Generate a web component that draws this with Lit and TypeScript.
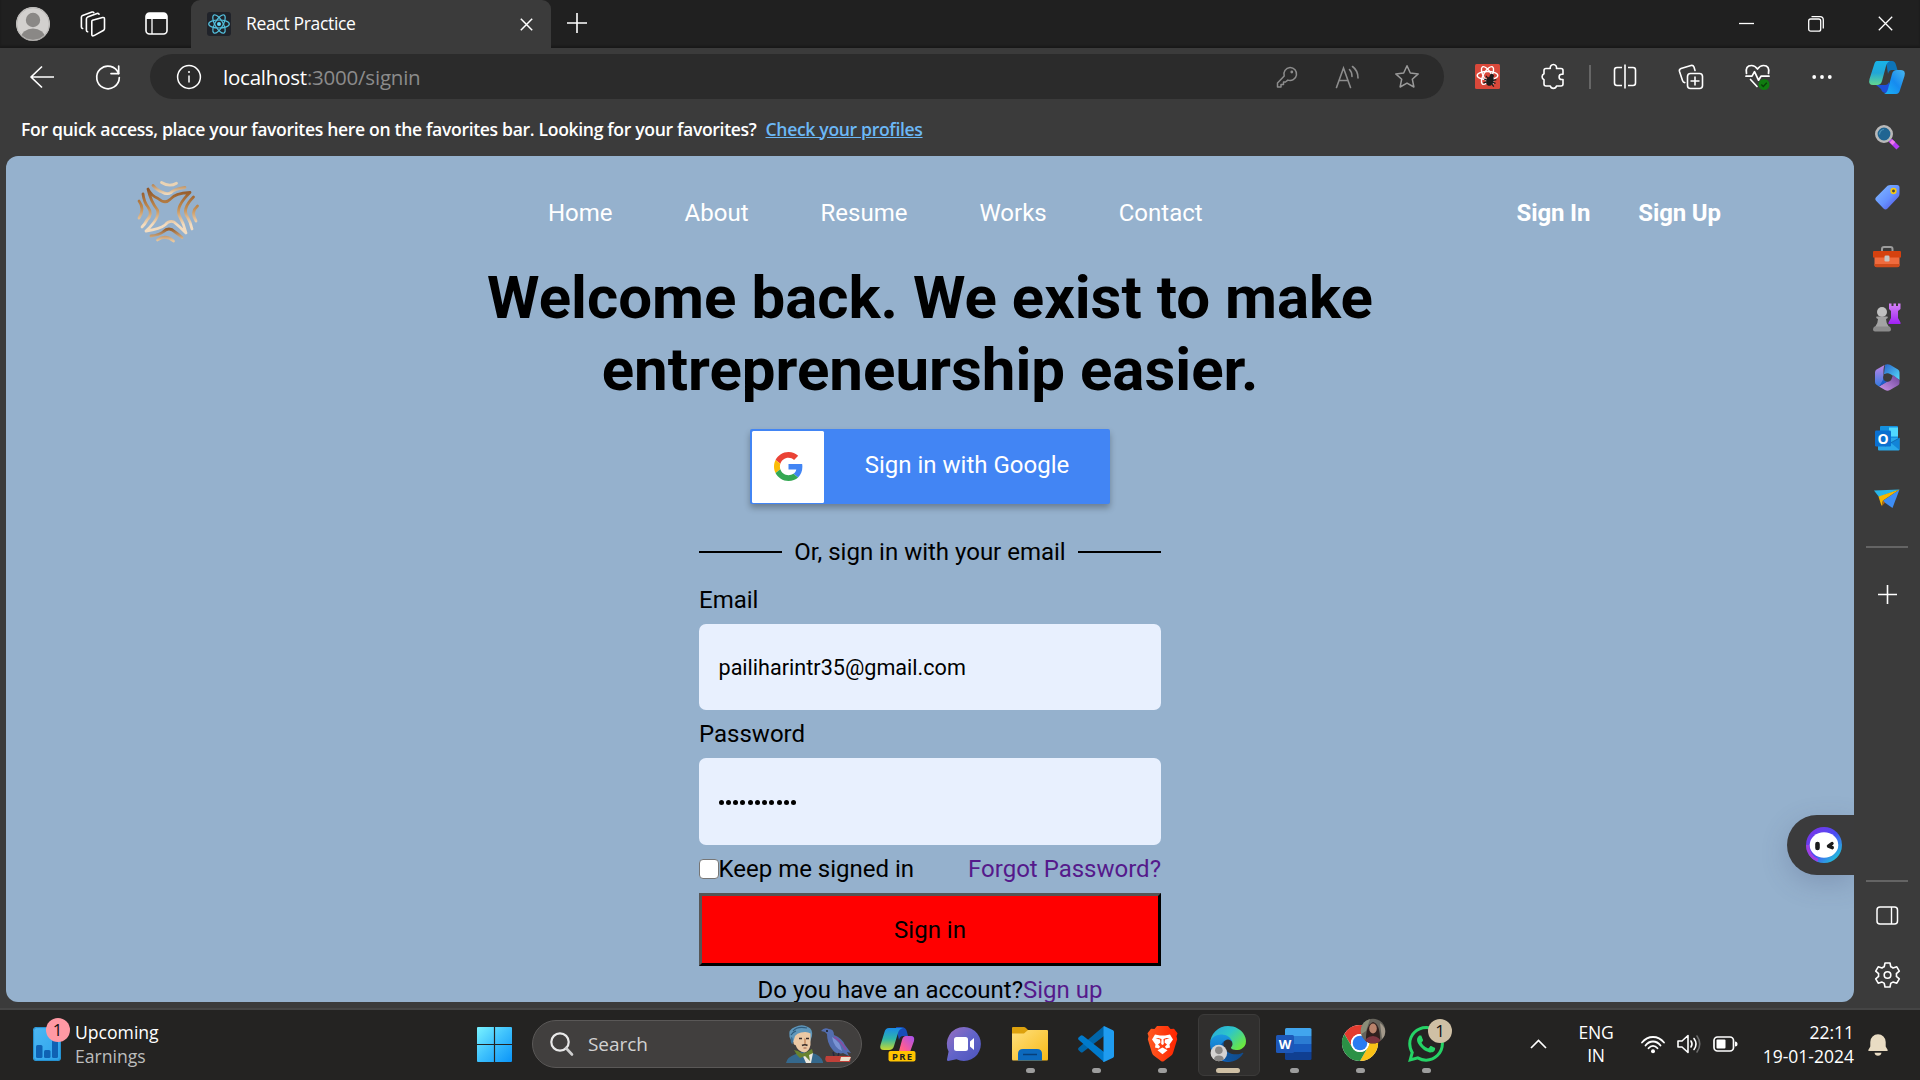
import { LitElement, html, css, svg } from "lit";
import { customElement } from "lit/decorators.js";

/* Inline icon: a w x h drawing whose user units are screen pixels unless a viewBox is given. */
const icon = (w: number, h: number, body: unknown, viewBox = `0 0 ${w} ${h}`) =>
  html`<svg class="icon" width=${w} height=${h} viewBox=${viewBox} fill="none">${body}</svg>`;

const avatar = icon(34, 34, svg`
  <defs><clipPath id="av"><circle cx="17" cy="17" r="17"/></clipPath></defs>
  <g clip-path="url(#av)"><rect width="34" height="34" fill="#d2d0ce"/>
  <circle cx="17" cy="13" r="7.2" fill="#8a8886"/><ellipse cx="17" cy="31" rx="12" ry="9.5" fill="#8a8886"/></g>
  <circle cx="17" cy="17" r="16.3" stroke="#b9b7b5" stroke-width="1"/>`);

const workspaces = icon(26, 26, svg`<g stroke="#fff" stroke-width="1.6" stroke-linejoin="round" stroke-linecap="round">
  <path d="M12.5 9.2 22.5 6.5q2-.4 2 1.5v9.5q0 1-.8 1.8L14 24.6q-2.2.9-2.2-1V10.5q0-1 .7-1.3z"/>
  <path d="M7.6 20.8q-1.2-.3-1.2-1.6V8q0-1.3 1.2-1.9l9.4-3.6q1.6-.5 2 .8"/>
  <path d="M2.6 17.5q-1.2-.3-1.2-1.6V6.3q0-1.3 1.2-1.9L12 1.1q1.4-.4 1.8.5"/></g>`);

const tabActions = icon(23, 23, svg`<rect x="1" y="1" width="21" height="21" rx="3.5" stroke="#fff" stroke-width="1.6"/>
  <path d="M1 7V4.5Q1 1 4.500 1h14Q22 1 22 4.500V7z" fill="#fff"/><path d="M7 7v15" stroke="#fff" stroke-width="1.3"/>`);

const reactFav = icon(24, 24, svg`<rect width="24" height="24" rx="3" fill="#20232a"/>
  <g stroke="#53c1de" stroke-width="1.200"><ellipse cx="12" cy="12" rx="10.300" ry="4"/>
  <ellipse cx="12" cy="12" rx="10.300" ry="4" transform="rotate(60 12 12)"/>
  <ellipse cx="12" cy="12" rx="10.300" ry="4" transform="rotate(120 12 12)"/></g><circle cx="12" cy="12" r="2" fill="#61dafb"/>`);

const cross = (s: number, w: number) => icon(s, s, svg`<path d="M.8.8 ${s - 0.8} ${s - 0.8}M${s - 0.8}.8.8 ${s - 0.8}" stroke="#fff" stroke-width=${w}/>`);
const plus = (s: number) => icon(s, s, svg`<path d="M${s / 2} 0v${s}M0 ${s / 2}h${s}" stroke="#fff" stroke-width="1.600"/>`);
const minimise = icon(15, 15, svg`<path d="M0 7.500h15" stroke="#fff" stroke-width="1.300"/>`);
const restore = icon(16, 16, svg`<rect x=".7" y="3" width="12" height="12.200" rx="2" stroke="#fff" stroke-width="1.300"/>
  <path d="M3.500.7h8.500q3.300 0 3.300 3.300v8.500" stroke="#fff" stroke-width="1.300"/>`);

const back = icon(26, 24, svg`<path d="M13 1.500 2 12l11 10.500M2 12h23" stroke="#fff" stroke-width="1.700" stroke-linejoin="round"/>`);
const refresh = icon(26, 26, svg`<path d="M23.600 9.500A11.300 11.300 0 1 0 24.300 13.500" stroke="#fff" stroke-width="1.700" stroke-linecap="round"/>
  <path d="M23.700 2v7.600H16" stroke="#fff" stroke-width="1.700" stroke-linecap="round" stroke-linejoin="round"/>`);
const info = icon(26, 26, svg`<circle cx="13" cy="13" r="11.400" stroke="#fff" stroke-width="1.500"/>
  <path d="M13 11.500v7" stroke="#fff" stroke-width="1.500"/><circle cx="13" cy="8" r="1" fill="#fff"/>`);
const key = icon(22, 22, svg`<g stroke="#8d8d8d" stroke-width="1.500" stroke-linejoin="round"><path d="M14 1.500a6.500 6.500 0 1 1-2.200 12.600L9.500 16H7.500v2.500H5V21H1.500v-4L8.200 10A6.500 6.500 0 0 1 14 1.500z"/></g><circle cx="15.800" cy="6" r="1.400" fill="#8d8d8d"/>`);
const readAloud = icon(25, 24, svg`<g stroke="#8d8d8d" stroke-width="1.600" stroke-linecap="round"><path d="M1.500 22.500 8.500 3l7 19.500M4 15.500h9"/>
  <path d="M14.500 4.500q2.500 2.500 2.500 7M17.500 1.500q5.500 4 5.500 11.500"/></g>`);
const star = icon(26, 26, svg`<path d="m13 1.800 3.300 7.200 7.900.9-5.900 5.300 1.600 7.800L13 19.100 6.100 23l1.600-7.800-5.900-5.300 7.900-.9z" stroke="#9a9a9a" stroke-width="1.500" stroke-linejoin="round"/>`);
const devtools = icon(25, 25, svg`<rect width="25" height="25" rx="1.500" fill="#d9483a"/>
  <g stroke="#fff" stroke-width="1.400"><ellipse cx="12.500" cy="11.500" rx="10.300" ry="4"/>
  <ellipse cx="12.500" cy="11.500" rx="10" ry="4" transform="rotate(60 12.500 11.500)"/><ellipse cx="12.500" cy="11.500" rx="10" ry="4" transform="rotate(120 12.500 11.500)"/></g>
  <g transform="rotate(20 15 17)"><ellipse cx="15" cy="17" rx="3.600" ry="5" fill="#1d1d1d"/><circle cx="15" cy="11.800" r="2.200" fill="#1d1d1d"/>
  <path d="M9.500 13.500 20.500 21M9.500 21l11-7.500M9 17.300h12" stroke="#1d1d1d" stroke-width="1.300"/></g>`);
const puzzle = icon(24, 25, svg`<path d="M3 6.500Q3 4.500 5 4.500h4.300a3.200 3.200 0 1 1 6.200 0H20q2 0 2 2v3.800h-1.300a2.600 2.600 0 1 0 0 5.200H22v4.500q0 2-2 2h-4.500a3.200 3.200 0 0 1-6.200 0H5q-2 0-2-2v-4.200a3.300 3.300 0 0 1 0-6z" stroke="#fff" stroke-width="1.600" stroke-linejoin="round"/>`);
const split = icon(24, 25, svg`<path d="M9 3.500H4Q1.500 3.500 1.500 6v13Q1.500 21.500 4 21.500h5M15 3.500h5q2.500 0 2.500 2.500v13q0 2.500-2.500 2.500h-5M12 .5v24" stroke="#fff" stroke-width="1.600"/>`);
const collections = icon(26, 26, svg`<rect x="9.500" y="9.500" width="15" height="15" rx="3" stroke="#fff" stroke-width="1.600"/>
  <path d="M17 12.500v9M12.500 17h9" stroke="#fff" stroke-width="1.600"/><path d="M6.800 18.600q-1.600 0-2.200-1.800L1.500 7.500q-.6-2.200 1.500-3L13 1.500q2.200-.5 3 1.500l1 3.500" stroke="#fff" stroke-width="1.600" stroke-linecap="round"/>`);
const essentials = icon(28, 28, svg`<g stroke="#fff" stroke-width="1.700" stroke-linejoin="round" stroke-linecap="round">
  <path d="M2.500 10.500Q1 2.500 7.500 2.500q3.500 0 6 3.500 2.500-3.500 6-3.500 6.500 0 5 8M2 13.200h6l2.500-4.500 4 8.500 2.500-4h8M6.500 16.500l6.500 7"/></g>
  <circle cx="20" cy="21.500" r="5.500" fill="#107c10"/><path d="m17.300 21.500 2 2 3.500-3.800" stroke="#0a3f0a" stroke-width="1.300"/>`);
const dots = icon(20, 6, svg`<g fill="#fff"><circle cx="2.200" cy="3" r="1.900"/><circle cx="10" cy="3" r="1.900"/><circle cx="17.800" cy="3" r="1.900"/></g>`);

const copilot = icon(36, 33, svg`<defs><linearGradient id="cA" x1="0" y1="0" x2="0" y2="1"><stop stop-color="#18b4e8"/><stop offset=".5" stop-color="#22a7d8"/><stop offset="1" stop-color="#63d88f"/></linearGradient>
  <linearGradient id="cB" x1="0" y1="1" x2="1" y2="0"><stop stop-color="#1bb6f5"/><stop offset=".5" stop-color="#168bf0"/><stop offset="1" stop-color="#48b6ee"/></linearGradient></defs>
  <path d="M17 0h6q3 0 4 4l1.500 5H23q-3 0-4 4z" fill="#0d74b8"/><path d="M7 24h9q3 0 4-3l2 11h-5q-4 0-5-4z" fill="#1d4fd7"/>
  <path d="M8 0h13q-3 1-4 5l-4 15q-1 4-5 4H4q-5 0-3.500-6L5 4Q6 0 8 0z" fill="url(#cA)"/>
  <path d="M27 33H15q3-1 4-5l4-15q1-4 5-4h4q5 0 3.500 6L31 29q-1 4-4 4z" fill="url(#cB)"/>`);

const sideSearch = icon(26, 26, svg`<path d="m16 16 8 8" stroke="#b53bf5" stroke-width="4.500"/><path d="m17 17 3 2.500" stroke="#ee7bea" stroke-width="4"/>
  <circle cx="10" cy="10" r="7.700" fill="#206592" stroke="#b9b9b9" stroke-width="2.600"/><path d="M5.500 10.500a4.700 4.700 0 0 1 4.500-5" stroke="#4b8fb4" stroke-width="1.200"/>`);
const tag = icon(25, 25, svg`<defs><linearGradient id="tg" x1="0" y1="0" x2="1" y2="1"><stop stop-color="#83bdff"/><stop offset=".55" stop-color="#6591ff"/><stop offset="1" stop-color="#5145db"/></linearGradient></defs>
  <path d="M12.500.8Q14 0 15.500 0H22q2.500 0 2.500 2.500V9q0 2-1.300 3.300L12.500 23.500q-2 2-4 0L1.300 16q-2-2 0-4z" fill="url(#tg)"/><circle cx="18.500" cy="6" r="2.300" fill="#444" stroke="#f5c711" stroke-width="1.700"/>`);
const toolbox = icon(28, 22, svg`<path d="M9 6V3q0-2 2-2h6.500q2 0 2 2v3" stroke="#9c9c9c" stroke-width="2"/>
  <path d="M1.500 11h25v8q0 2-2 2h-21q-2 0-2-2z" fill="#ef6b3e"/><path d="M1.500 18h25v1.500q0 1.800-2 1.800h-21q-2 0-2-1.800z" fill="#d04c1c"/><path d="M0 6q0-1 1-1h26q1 0 1 1v5.500H0z" fill="#d5410f"/><rect x="11.500" y="9.500" width="5" height="6" rx="1.300" fill="#c4c4c4"/>`);
const chess = icon(28, 29, svg`<defs><linearGradient id="rk" x1="0" y1="0" x2="0" y2="1"><stop stop-color="#d583f5"/><stop offset="1" stop-color="#a020f5"/></linearGradient></defs>
  <path d="M16 .5h2.500V3h2V.5H23V3h2V.5h2.500V6L25 8v7l2.500 4.500V21H15.500v-1.500L18 15V8l-2-2z" fill="url(#rk)"/>
  <circle cx="9" cy="9" r="5" fill="#c0c0c0"/><path d="M3.500 13.500h11q1 1.500-1.500 2.500 0 4.500 3 8H2q3-3.500 3-8-2.500-1-1.500-2.500z" fill="#a3a3a3"/><path d="M1.500 23.500h15q1.500 1 1.500 3t-2 2H2q-2 0-2-2t1.500-3z" fill="#8b8b8b"/>`);
const m365 = icon(25, 27, svg`<defs><linearGradient id="mA" x1="0" y1="0" x2="0" y2="1"><stop stop-color="#c084e6"/><stop offset="1" stop-color="#357bdf"/></linearGradient>
  <linearGradient id="mB" x1="0" y1="0" x2="1" y2="1"><stop stop-color="#2a63c9"/><stop offset="1" stop-color="#53dcfb"/></linearGradient><linearGradient id="mC" x1="0" y1="1" x2="1" y2="0"><stop stop-color="#cf97ec"/><stop offset="1" stop-color="#6b4399"/></linearGradient></defs>
  <path d="M10 .8Q12.500-.5 15 .8l8 4.700q1.500 1 1.500 3V16L16 10.500 9 10z" fill="url(#mB)"/><path d="m4 22.500 8-5q5-2 6-6.500l6.500 5v3q0 1.500-1.300 2.300L15 26q-2.500 1.500-5 0z" fill="url(#mC)"/>
  <path d="M9.500 1Q8.500 3 8.500 6v13L4 22.500l-2.500-1.700Q0 20 0 18V8.500q0-2 1.500-3z" fill="url(#mA)"/><path d="M4 22.500 8.500 15v-3l5 5z" fill="#1f5dc9"/><circle cx="12.500" cy="13.500" r="4.300" fill="#3b3b3b"/>`);
const outlook = icon(25, 25, svg`<rect x="5" y="0" width="18" height="13" rx="1" fill="#1490df"/><rect x="14" y="1.500" width="9" height="9" fill="#50d9ff"/><path d="M3 12h21.500v11.500q0 1-1 1H4q-1 0-1-1z" fill="#28a8ea"/><path d="m16 17 8.500-5v12z" fill="#1184d8"/><path d="M24.500 12 10 20" stroke="#0a5ea8" stroke-width=".8"/>
  <rect x="0" y="4.500" width="16" height="16" rx="1.200" fill="#0a70d0"/><text x="8" y="17.600" text-anchor="middle" fill="#fff" font-family="Open Sans, sans-serif" font-weight="700" font-size="14">O</text>`);
const plane = icon(26, 19, svg`<path d="M0 1.500 25.500.5 5 8z" fill="#29b6e8"/><path d="M25.500.5 18.500 19 8.500 12z" fill="#3d8df5"/><path d="M25.500.5 4.500 7.500 7.500 17l1.500-5.500z" fill="#f5b800"/><path d="m9 11.500-1.500 6 3.500-4z" fill="#b56a10"/>`);
const panel = icon(23, 19, svg`<rect x="1" y="1" width="20.500" height="17" rx="3" stroke="#fff" stroke-width="1.500"/><path d="M15.500 1v17" stroke="#fff" stroke-width="1.400"/>`);
const gear = icon(27, 28, svg`<path d="M11 2h5l.8 3.800q1.200.5 2.200 1.200L22.800 5.800l2.500 4.300-2.900 2.600q.2 1.300 0 2.600l2.900 2.600-2.500 4.300L19 21q-1 .8-2.200 1.200L16 26h-5l-.8-3.800Q9 21.800 8 21l-3.800 1.200-2.500-4.300 2.900-2.600q-.2-1.300 0-2.600L1.700 10.100l2.500-4.300L8 7q1-.7 2.200-1.200z" stroke="#fff" stroke-width="1.600" stroke-linejoin="round"/><circle cx="13.500" cy="14" r="3.300" stroke="#fff" stroke-width="1.600"/>`);

const logo = icon(62, 63, svg`<defs><linearGradient id="gold" gradientUnits="userSpaceOnUse" x1="0" y1="8" x2="0" y2="50"><stop stop-color="#8f5527"/><stop offset=".45" stop-color="#c18b4f"/><stop offset=".85" stop-color="#f3dcc0"/></linearGradient>
  <linearGradient id="gold2" gradientUnits="userSpaceOnUse" x1="0" y1="0" x2="0" y2="14"><stop stop-color="#a2682f"/><stop offset="1" stop-color="#f6e2c6"/></linearGradient>
  <linearGradient id="gold3" gradientUnits="userSpaceOnUse" x1="0" y1="48" x2="0" y2="60"><stop stop-color="#97602f"/><stop offset="1" stop-color="#e8c79e"/></linearGradient></defs>
  <g transform="translate(1 0)" stroke-linecap="round" stroke-linejoin="round" stroke-width="2.800">
  <path d="M23.500 1.500q8 5 15 .7" stroke="#ead3b4"/><path d="M15 4.500q5 5.500 9 6.500 5 3 9 .5 3-3.500 14-5" stroke="url(#gold2)"/>
  <path d="M10 8q3 6.500 10 9.500 7 6 12 1 5-6.500 20-7Q38 25 41 34q5 9 7 18-6-6-12-11-5-2-9 3-5 4-19 6Q22 37 19.500 29 12.500 20 10 8z" stroke="url(#gold)"/>
  <path d="M5 13q1 8 5 13 5 7-1 13-2 4-5 7M1 20q6 8 0 17M55.500 16q-12 12-6 20 3 5 4.500 12M59.500 25q-7 6-1.500 15" stroke="url(#gold)"/>
  <path d="M13 55q8-1 12-4 6-6 12 0 3 2 7 5.500M19.500 59q8-6 16 1" stroke="url(#gold3)"/></g>`);

const googleG = icon(29, 29, svg`<path fill="#EA4335" d="M24 9.500c3.540 0 6.710 1.220 9.210 3.600l6.850-6.850C35.900 2.380 30.470 0 24 0 14.620 0 6.510 5.380 2.560 13.220l7.980 6.190C12.430 13.720 17.740 9.500 24 9.500z"/><path fill="#4285F4" d="M46.980 24.550c0-1.570-.15-3.090-.38-4.550H24v9.020h12.940c-.58 2.960-2.260 5.480-4.780 7.180l7.730 6c4.510-4.180 7.090-10.360 7.090-17.650z"/><path fill="#FBBC05" d="M10.530 28.590c-.48-1.450-.76-2.990-.76-4.590s.27-3.140.76-4.590l-7.980-6.190C.92 16.460 0 20.120 0 24c0 3.880.92 7.540 2.560 10.780l7.970-6.190z"/><path fill="#34A853" d="M24 48c6.480 0 11.930-2.130 15.890-5.810l-7.730-6c-2.150 1.450-4.920 2.300-8.160 2.300-6.260 0-11.570-4.220-13.470-9.910l-7.980 6.190C6.510 42.620 14.620 48 24 48z"/>`, "0 0 48 48");

const bot = icon(36, 36, svg`<defs><linearGradient id="bt" x1="0" y1="0" x2="1" y2="1"><stop offset=".1" stop-color="#7a35e8"/><stop offset=".5" stop-color="#4a4cf5"/><stop offset=".85" stop-color="#22b9dc"/></linearGradient></defs>
  <circle cx="18" cy="18" r="18" fill="url(#bt)"/><path d="M1.500 18A16.500 16.500 0 0 0 12 33.400" stroke="#a13fe0" stroke-width="3"/><ellipse cx="18" cy="18" rx="14.300" ry="12.700" fill="#fff"/>
  <path d="M11.500 17v4" stroke="#1b1b1b" stroke-width="4.600" stroke-linecap="round"/><path d="m26 16.500-3.500 2.700 3.800 1.500" stroke="#1b1b1b" stroke-width="3.400" stroke-linecap="round" stroke-linejoin="round"/>`);

const widget = icon(28, 34, svg`<defs><linearGradient id="wd" x1="0" y1="0" x2="1" y2="1"><stop stop-color="#4db8f5"/><stop offset="1" stop-color="#2ba3ea"/></linearGradient></defs>
  <rect width="28" height="34" rx="3.500" fill="url(#wd)"/><rect x=".6" y=".6" width="26.800" height="32.800" rx="3" stroke="#248fce" stroke-width="1"/>
  <g fill="#0f62b4"><rect x="3" y="18" width="6.500" height="13" rx="1.500"/><rect x="11" y="23" width="6.500" height="8" rx="1.500"/><rect x="19" y="13" width="6" height="18" rx="1.500"/></g>`);
const windows = icon(35, 35, svg`<defs><linearGradient id="wn" x1="0" y1="0" x2="1" y2="1"><stop stop-color="#7af3ff"/><stop offset=".5" stop-color="#3dc0fd"/><stop offset="1" stop-color="#0a94f8"/></linearGradient></defs>
  <path d="M1 0h15.900v16.900H0V1Q0 0 1 0zM18.100 0H34q1 0 1 1v15.900H18.100zM0 18.100h16.900V35H1q-1 0-1-1zM18.100 18.100H35V34q0 1-1 1H18.100z" fill="url(#wn)"/>`);
const magnify = icon(23, 24, svg`<circle cx="10" cy="10" r="8.700" stroke="#e9e9e9" stroke-width="2.200"/><path d="m16 16 6 6.500" stroke="#cfcfcf" stroke-width="2.600" stroke-linecap="round"/>`);
const poe = icon(66, 38, svg`
  <path d="M0 38q1-6 10-9l5-2 11 1q9 2 11 9v1z" fill="#35688c"/><path d="m16 29 4 9h5l2-10z" fill="#ece8df"/>
  <path d="M3.500 12Q2 4 9 2q7-3.500 13 0 5 2 4 9l-2 6H6z" fill="#5f96ba"/><path d="M7 6q4-5 14-3M5 10q2-3 5-4" stroke="#2f5b7c" stroke-width="1.200"/>
  <path d="M5 12q2 0 2 4t-1 3q-2-2-1-7z" fill="#3f7096"/>
  <path d="M9 11q2-3 6-3.500 6-1.500 9.500 1V20q-1.500 7-6 7.500Q12 27 9.500 20 7 20 7.500 16z" fill="#ecc9a5"/><path d="M18 13v6l2 1v-6z" fill="#cf9b72"/>
  <path d="M13 13.500h3M20 13.500h3M16 20.500q3-1.500 5.500 0" stroke="#372b29" stroke-width="1.600"/><path d="M17.500 23h3" stroke="#9d5a45"/>
  <path d="M8 25q4 0 8 3.500l4-1 6-3.500 1 4-4 2 1 6-5-5-5 2-3-3z" fill="#69832f"/>
  <path d="M35 6q3-4 8-2 5 0 5 6 8 3 11 10l6 8-4-1 2 4-6-3q-7 2-11-4-5-6-5-15l-2-2z" fill="#536eb0"/>
  <path d="M46 12q8 4 10 14-8-3-10-14z" fill="#7a93d4"/><path d="M48 12q7 4 12 13" stroke="#854fa4" stroke-width="2"/><circle cx="41" cy="6" r=".9" fill="#111"/>
  <path d="m47 27 1 4M53 28l-1 3" stroke="#262641" stroke-width="1.400"/><path d="M40 31h24q1 1 0 6H41q-3-2-1-6z" fill="#c04039"/><path d="M55 32h10l-2 4h-9z" fill="#eadfcb"/>`);
const copilotPre = icon(36, 35, svg`<defs><linearGradient id="pA" x1="0" y1="0" x2="0" y2="1"><stop stop-color="#1a8be8"/><stop offset=".5" stop-color="#2fb6a8"/><stop offset="1" stop-color="#c9d92f"/></linearGradient><linearGradient id="pB" x1="0" y1="1" x2="1" y2="0"><stop stop-color="#ff8a4c"/><stop offset=".4" stop-color="#ff5c92"/><stop offset="1" stop-color="#a452f2"/></linearGradient></defs>
  <path d="M16 0h5q5 0 6 5l1 4h-5q-3 0-4 4z" fill="#174db8"/><path d="M9 1h14q-4 1-5 5l-4 13q-1 4-5 4H4q-5 0-3.500-5L4.500 5Q5.500 1 9 1z" fill="url(#pA)"/><path d="M27 28H15q3-1 4-4l3-11q1-4 4-4h5q4 0 3 5l-4 11q-1 3-3 3z" fill="url(#pB)"/>
  <rect x="8.500" y="24" width="27" height="10.500" rx="2" fill="#ffc400"/><text x="22" y="32.600" text-anchor="middle" textLength="20" font-family="Noto Sans, sans-serif" font-weight="700" font-size="9.500" fill="#222">PRE</text>`);
const chat = icon(36, 36, svg`<defs><linearGradient id="ch" x1="0" y1="0" x2="1" y2="1"><stop stop-color="#9a6fc0"/><stop offset=".5" stop-color="#6264c9"/><stop offset="1" stop-color="#4b53bc"/></linearGradient></defs>
  <path d="M18 1a17 17 0 1 1-7.500 32.300L2 35q-1.300 0-1-1.400l1.600-8A17 17 0 0 1 18 1z" fill="url(#ch)"/><rect x="8" y="11" width="14" height="14" rx="2.500" fill="#fff"/><path d="M24 15.500 28 12v12l-4-3.500z" fill="#fff"/>`);
const folder = icon(36, 34, svg`<defs><linearGradient id="fo" x1="0" y1="0" x2="1" y2="1"><stop stop-color="#ffe07d"/><stop offset="1" stop-color="#f7b917"/></linearGradient></defs>
  <path d="M0 1q0-1 1-1h11q1 0 2 1l3 3v8H0z" fill="#dda10d"/><path d="M0 6.500h12L16 3h19q1 0 1 1v28q0 1.500-1 1.500H1q-1 0-1-1.500z" fill="url(#fo)"/><path d="M6 33.500V27q0-5 5-5h14q5 0 5 5v6.500z" fill="#0c69bd"/><path d="M11 27.500h14" stroke="#073f79" stroke-width="1.500"/>`);
const vscode = icon(36, 36, svg`<path d="M26 0v10L5 26q-1.300 1-2.500 0L.6 24.200q-1.200-1.200 0-2.400z" fill="#0065a9"/><path d="M26 36V26L5 9.700q-1.300-1-2.500 0L.6 11.400q-1.200 1.200 0 2.400z" fill="#007acc"/><path d="m26 0 9 4.300q1 .5 1 1.700v24q0 1.200-1 1.700L26 36q-1.500 0-.5-1.500V1.500Q25.500.5 26 0z" fill="#1f9cf0"/>`);
const brave = icon(31, 36, svg`<defs><linearGradient id="br"><stop stop-color="#ff5a22"/><stop offset="1" stop-color="#ff2400"/></linearGradient></defs>
  <path d="M7.500 3 10 0h11l2.500 3 3.500-.3 3.500 4.500-1 3 .7 3L26 27q-.5 1.700-2 2.700l-7 5.300q-1.500 1-3 0l-7-5.300q-1.500-1-2-2.700L.8 13.200l.7-3-1-3L4 2.700z" fill="url(#br)"/>
  <path d="M8 8.500l5 1h5l5-1 3 5-3.500 5 .5 3-4 1-1-2 2-2-2.500-2 .5-3 4.500-1-3-.5-3 1 .3 5-1.300 1-1.300-1 .3-5-3-1-3 .5 4.500 1 .5 3-2.500 2 2 2-1 2-4-1 .5-3-3.500-5z" fill="#fff"/><path d="m15.500 21.500 5 2.700-5 4-5-4z" fill="#fff"/>`);
const edge = icon(36, 36, svg`<defs><linearGradient id="eA" x1="0" x2="1"><stop stop-color="#0c59a4"/><stop offset="1" stop-color="#114a8b"/></linearGradient><linearGradient id="eB" x1="0" y1="0" x2="0" y2="1"><stop stop-color="#1b9de2"/><stop offset="1" stop-color="#0d5fbd"/></linearGradient><linearGradient id="eC" x1="0" y1="0" x2="1" y2=".7"><stop stop-color="#27a4dd"/><stop offset=".5" stop-color="#2ec6c8"/><stop offset="1" stop-color="#6be83f"/></linearGradient></defs>
  <path fill="url(#eA)" d="M231 190.500c-3.400 1.800-6.900 3.400-10.500 4.700a101.500 101.500 0 0 1-35.900 6.400c-47.300 0-88.500-32.500-88.500-74.300a31.500 31.500 0 0 1 16.400-27.300c-42.800 1.800-53.800 46.400-53.800 72.500 0 74 68.100 81.400 82.800 81.400 7.900 0 19.800-2.300 27-4.600l1.300-.4a128.300 128.300 0 0 0 66.600-52.800 4 4 0 0 0-5.400-5.600z"/>
  <path fill="url(#eB)" d="M105.700 241.400a79.200 79.200 0 0 1-22.700-21.300 80.700 80.700 0 0 1 29.500-120c3.200-1.500 8.500-4.100 15.600-4a32.400 32.400 0 0 1 25.700 13 31.900 31.900 0 0 1 6.300 18.700c0-.2 24.500-79.600-80-79.600-43.900 0-80 41.700-80 78.200a130.200 130.200 0 0 0 12.100 56 128 128 0 0 0 156.400 67 75.500 75.500 0 0 1-62.800-8z"/>
  <path fill="url(#eC)" d="M152.300 148.900c-.9 1-3.400 2.500-3.400 5.600 0 2.600 1.700 5.200 4.800 7.300 14.300 10 41.400 8.600 41.500 8.600a59.600 59.600 0 0 0 30.300-8.300 61.400 61.400 0 0 0 30.400-52.900c.3-22.400-8-37.300-11.300-43.900C223.500 23.900 177.700 0 128 0A128 128 0 0 0 0 126.200c.5-36.500 36.800-66 80-66 3.500 0 23.500.3 42 10a72.600 72.600 0 0 1 30.900 29.300c6.100 10.600 7.200 24.100 7.200 29.500 0 5.400-2.700 13.300-7.800 19.900z"/>
  <g><circle cx="63" cy="192" r="59" fill="#d5d3d1"/><circle cx="63" cy="173" r="27" fill="#898785"/><path d="M28 239q2-30 35-30t35 30q-35 24-70 0z" fill="#898785"/></g>`, "0 0 256 256");
const word = icon(36, 33, svg`<path d="M9 1.500Q9 0 10.500 0H34q1.500 0 1.500 1.500V8H9z" fill="#41a5ee"/><path d="M9 8h26.500v8H9z" fill="#2b7cd3"/><path d="M9 16h26.500v8H9z" fill="#185abd"/><path d="M9 24h26.500v6.500Q35.500 32 34 32H10.500Q9 32 9 30.500z" fill="#103f91"/><rect x="0" y="7" width="18" height="18" rx="1.500" fill="#1d57b8"/>
  <text x="9" y="20.800" text-anchor="middle" fill="#fff" font-family="Open Sans, sans-serif" font-weight="700" font-size="13">W</text>`);
const chrome = icon(46, 44, svg`<g transform="translate(0 6)"><circle cx="18" cy="18" r="18" fill="#fff"/><path d="M18 9H33.600A18 18 0 0 0 2.400 9l7.800 13.500A9 9 0 0 1 18 9z" fill="#e33b2e"/><path d="M25.800 22.500 18 36A18 18 0 0 0 33.600 9H18a9 9 0 0 1 7.800 13.500z" fill="#fbc116"/><path d="M10.200 22.500 2.400 9A18 18 0 0 0 18 36l7.800-13.500a9 9 0 0 1-15.600 0z" fill="#2b9146"/><circle cx="18" cy="18" r="9" fill="#fff"/><circle cx="18" cy="18" r="7.300" fill="#2b7bf0"/></g>
  <defs><clipPath id="ph"><circle cx="31" cy="12" r="12.300"/></clipPath></defs><g clip-path="url(#ph)"><rect x="18" y="-1" width="28" height="27" fill="#66645c"/><path d="M18 0h10l-4 12-6 4z" fill="#8b8e78"/><path d="M24 26q-1-20 7-23 8 2 7 23z" fill="#30201e"/><ellipse cx="31" cy="9.500" rx="3.800" ry="5" fill="#b9836c"/><path d="M22 26q0-8 9-9 8 1 9 9z" fill="#7d3540"/><path d="M38 4q6 4 6 12l-4 4z" fill="#a2988a"/></g>`);
const whatsapp = icon(36, 36, svg`<path fill="#25d366" d="M17.472 14.382c-.297-.149-1.758-.867-2.030-.967-.273-.099-.471-.148-.67.15-.197.297-.767.966-.94 1.164-.173.199-.347.223-.644.075-.297-.15-1.255-.463-2.390-1.475-.883-.788-1.480-1.761-1.653-2.059-.173-.297-.018-.458.13-.606.134-.133.298-.347.446-.52.149-.174.198-.298.298-.497.099-.198.05-.371-.025-.52-.075-.149-.669-1.612-.916-2.207-.242-.579-.487-.5-.669-.51-.173-.008-.371-.01-.57-.01-.198 0-.52.074-.792.372-.272.297-1.040 1.016-1.040 2.479 0 1.462 1.065 2.875 1.213 3.074.149.198 2.096 3.200 5.077 4.487.709.306 1.262.489 1.694.625.712.227 1.360.195 1.871.118.571-.085 1.758-.719 2.006-1.413.248-.694.248-1.289.173-1.413-.074-.124-.272-.198-.57-.347m-5.421 7.403h-.004a9.870 9.870 0 0 1-5.031-1.378l-.361-.214-3.741.982.998-3.648-.235-.374a9.860 9.860 0 0 1-1.510-5.260c.001-5.450 4.436-9.884 9.888-9.884 2.640 0 5.122 1.030 6.988 2.898a9.825 9.825 0 0 1 2.893 6.994c-.003 5.450-4.437 9.884-9.885 9.884m8.413-18.297A11.815 11.815 0 0 0 12.050 0C5.495 0 .16 5.335.157 11.892c0 2.096.547 4.142 1.588 5.945L.057 24l6.305-1.654a11.882 11.882 0 0 0 5.683 1.448h.005c6.554 0 11.890-5.335 11.893-11.893a11.821 11.821 0 0 0-3.480-8.413Z"/>`, "0 0 24 24");

const chevron = icon(17, 10, svg`<path d="m1 9 7.500-7.500L16 9" stroke="#fff" stroke-width="1.700"/>`);
const wifi = icon(24, 19, svg`<g stroke="#fff" stroke-width="1.800" stroke-linecap="round"><path d="M1 7.500Q5.500 2 12 2t11 5.500"/><path d="M4.500 10.500Q7.500 6.500 12 6.500t7.500 4"/><path d="M7.500 13.300q2-2.500 4.500-2.500t4.500 2.500"/></g><circle cx="12" cy="16.200" r="2" fill="#fff"/>`);
const speaker = icon(24, 20, svg`<path d="M1 7h4l6-5.500v17L5 13H1z" stroke="#fff" stroke-width="1.600" stroke-linejoin="round"/><path d="M14 7q2 3 0 6M17 4.500q4 5.500 0 11" stroke="#fff" stroke-width="1.600" stroke-linecap="round"/><path d="M20 2q5.500 8 0 16" stroke="#6d6d6d" stroke-width="1.600" stroke-linecap="round"/>`);
const battery = icon(25, 16, svg`<rect x="1" y="1" width="19.500" height="14" rx="3.500" stroke="#fff" stroke-width="1.700"/><rect x="3.500" y="3.500" width="9" height="9" rx="1" fill="#fff"/><path d="M22 5.500q2.500 0 2.500 2.500T22 10.500z" fill="#fff"/>`);
const bell = icon(20, 23, svg`<path d="M2.300 9a7.700 7.700 0 0 1 15.400 0v4.500l2 3.500q.3 1-.7 1H1q-1 0-.7-1l2-3.500zM6.500 19.700h7q-.5 3-3.500 3t-3.500-3z" fill="#e9dcc3"/>`);

@customElement("app-root")
export class AppRoot extends LitElement {
  static styles = css`
    :host { display: block; width: 1920px; height: 1080px; overflow: hidden; background: #3b3b3b; color: #fff; font-family: "Open Sans", "Noto Sans", sans-serif; }
    * { box-sizing: border-box; }
    .icon { display: block; flex: none; overflow: visible; }
    .row, .strip, .toolbar, .address, .favs, .header, .taskbar { display: flex; align-items: center; }
    .text { white-space: nowrap; flex: none; }

    .strip { height: 48px; background: #202020; padding-left: 16px; box-shadow: inset 0 -2px 2px #191919; }
    .workspaces { margin-left: 30px; }
    .tabact { margin-left: 39px; padding-bottom: 1px; }
    .tab { display: flex; align-items: center; width: 360px; height: 48px; margin-left: 23px; padding: 0 18px 0 16px; background: #3b3b3b; border-radius: 9px 9px 0 0; }
    .tab .icon:first-child { margin-bottom: 1px; }
    .tab-title { margin-left: 15px; padding-bottom: 2px; font-size: 17.500px; letter-spacing: -0.330px; flex: 1; }
    .newtab { margin-left: 16px; padding-bottom: 2px; }
    .winctl { display: flex; align-items: center; gap: 54px; margin-left: auto; padding: 0 27px 1px 0; }

    .frame { display: flex; height: 960px; background: #3b3b3b; }
    .main { width: 1854px; height: 960px; }
    .toolbar { height: 57px; padding-left: 29px; }
    .refresh { margin-left: 40px; }
    .address { width: 1294px; height: 45px; margin-left: 29px; padding: 0 24px 0 26px; border-radius: 23px; background: #2b2b2b; }
    .url { margin-left: 21px; font-size: 20.500px; flex: 1; letter-spacing: -0.220px; }
    .dim { color: #8b8b8b; }
    .addr-icons { display: flex; align-items: center; }
    .a-read { margin: 0 34px 0 37px; }
    .tools { display: flex; align-items: center; margin-left: 31px; }
    .t-puzzle { margin-left: 41px; }
    .t-sep { width: 1.500px; height: 24px; margin: 0 22px 0 24px; background: #666; }
    .t-col { margin-left: 41px; }
    .t-ess { margin-left: 40px; }
    .t-dots { margin-left: 40px; }
    .favs { height: 51px; padding: 0 0 4px 21px; font-size: 17.600px; letter-spacing: -0.340px; font-weight: 600; }
    .favs a { color: #6cb8f6; text-decoration: underline; margin-left: 9px; }

    .page { position: relative; display: flex; flex-direction: column; width: 1848px; height: 846px; margin-left: 6px; border-radius: 12px; background: #95b1cd; overflow: hidden; color: #000; font-family: Roboto, sans-serif; font-size: 24px; line-height: 28px; }
    .header { flex: none; height: 106px; padding: 7px 0 0 131px; color: #fff; }
    .nav { display: flex; gap: 72px; margin-left: 349px; }
    .auth { display: flex; gap: 48px; margin-left: 314px; font-weight: 700; letter-spacing: -0.150px; }
    .title { margin: 0; font-size: 60px; line-height: 72px; font-weight: 700; text-align: center; height: 144px; }
    .google { display: flex; align-items: center; width: 360px; height: 75px; margin: 23px auto 0; padding: 2px; background: #4285f4; border-radius: 2px; box-shadow: 0 4px 6px rgba(0, 0, 0, 0.28); color: #fff; }
    .glogo { display: flex; align-items: center; justify-content: center; width: 72px; height: 72px; background: #fff; border-radius: 1.500px; }
    .gtext { flex: 1; text-align: center; padding: 0 0 3px 2px; }
    .form { display: flex; flex-direction: column; width: 462px; margin: 33px auto 0; }
    .or { display: flex; align-items: center; gap: 12px; height: 30px; }
    .or i { flex: 1; height: 2px; background: #000; }
    .label { margin-top: 19px; height: 28px; }
    .label2 { margin-top: 10px; height: 28px; }
    .field { display: flex; align-items: center; height: 86px; margin-top: 10px; padding: 1px 19.500px 0; border-radius: 7px; background: #e8f0fe; font-size: 21.600px; }
    .label2 + .field { height: 87px; }
    .pw { display: flex; gap: 2.250px; }
    .pw i { width: 5px; height: 5px; border-radius: 50%; background: #000; }
    .opts { display: flex; align-items: center; height: 28px; margin-top: 10px; }
    .box { width: 19.500px; height: 19.500px; border: 1.500px solid #767676; border-radius: 4px; background: #fff; }
    .opts .link { margin-left: auto; }
    .link { color: #551a8b; }
    .submit { display: flex; align-items: center; justify-content: center; height: 73px; margin-top: 10px; border: 3px solid; border-color: #555 #000 #000 #555; background: #f00; }
    .foot { text-align: center; margin-top: 10px; }
    .bubble { position: absolute; right: 0; top: 659px; display: flex; align-items: center; width: 67px; height: 60px; padding-left: 19px; border-radius: 30px 0 0 30px; background: #3b3b3c; box-shadow: 0 8px 26px rgba(70, 80, 120, 0.25); }

    .side { display: flex; flex-direction: column; width: 66px; height: 960px; align-items: center; }
    .cell { display: flex; align-items: center; justify-content: center; height: 60.200px; flex: none; }
    .cell.first { height: 59px; padding-bottom: 1px; }
    .rule { width: 42px; height: 1.500px; background: #646464; flex: none; }
    .r1 { margin: 18px 0 37.500px; }
    .r2 { margin: 276px 0 24px; }
    .s-gear { margin-top: 36px; }

    .taskbar { height: 72px; border-top: 2px solid #454545; background: #242322; padding-bottom: 2px; }
    .news { display: flex; align-items: center; width: 462px; padding-left: 33px; }
    .newsicon { position: relative; }
    .badge { position: absolute; display: flex; align-items: center; justify-content: center; width: 24px; height: 24px; border-radius: 50%; color: #111; font-size: 17px; line-height: 24px; }
    .pink { left: 12.500px; top: -9px; background: #ff99a4; }
    .tan { right: -8px; top: -7px; background: #cfc0a5; }
    .newstext { margin-left: 14px; font-size: 17.600px; line-height: 24px; }
    .grey { color: #bdbdbd; }
    .start { width: 66px; display: flex; justify-content: center; margin-right: 4px; padding-right: 2px; }
    .search { display: flex; align-items: center; width: 330px; height: 48px; padding: 0 9px 0 17px; border-radius: 24px; border: 1.500px solid #5a5857; background: #413f3e; }
    .search .text { margin-left: 15px; font-size: 19px; letter-spacing: -0.050px; color: #d2d2d2; flex: 1; }
    .apps { display: flex; margin-left: 3px; }
    .app { position: relative; display: flex; align-items: center; justify-content: center; width: 66px; height: 70px; }
    .wrap { position: relative; }
    .shift { margin: -7px -9px 0 0; }
    .active::before { content: ""; position: absolute; left: 3px; top: 5px; width: 60px; height: 60px; border-radius: 6px; background: #302f2e; border: 1px solid #3c3b3a; }
    .run::after { content: ""; position: absolute; left: 28.500px; top: 59px; width: 9px; height: 5px; border-radius: 3px; background: #9d9d9d; }
    .active::after { left: 21px; width: 24px; background: #cfc0a5; }
    .tray { display: flex; align-items: center; margin-left: auto; padding-right: 32px; font-size: 17.500px; line-height: 24px; }
    .lang { width: 50px; margin-left: 24px; text-align: center; line-height: 23px; letter-spacing: -0.200px; }
    .wifi { margin-left: 20px; }
    .speaker { margin-left: 12px; }
    .battery { margin-left: 12px; }
    .clock { width: 100px; margin: 0 14px 0 16px; text-align: right; white-space: nowrap; }
  `;

  private nav = ["Home", "About", "Resume", "Works", "Contact"];
  private tools = [sideSearch, tag, toolbox, chess, m365, outlook, plane];
  private apps = [
    { glyph: copilotPre }, { glyph: chat }, { glyph: folder, cls: "run" }, { glyph: vscode, cls: "run" }, { glyph: brave, cls: "run" },
    { glyph: edge, cls: "active run" }, { glyph: word, cls: "run" }, { glyph: chrome, cls: "run", wrap: "shift" }, { glyph: whatsapp, cls: "run", count: "1" },
  ] as { glyph: unknown; cls?: string; wrap?: string; count?: string }[];

  render() {
    return html`
      <div class="strip">
        ${avatar}<div class="workspaces">${workspaces}</div><div class="tabact">${tabActions}</div>
        <div class="tab">${reactFav}<span class="text tab-title">React Practice</span>${cross(13, 1.5)}</div>
        <div class="newtab">${plus(20)}</div>
        <div class="winctl">${minimise}${restore}${cross(15, 1.3)}</div>
      </div>
      <div class="frame">
        <div class="main">
          <div class="toolbar">
            ${back}<div class="refresh">${refresh}</div>
            <div class="address">${info}<span class="text url">localhost<span class="dim">:3000/signin</span></span>
              <div class="addr-icons">${key}<div class="a-read">${readAloud}</div>${star}</div>
            </div>
            <div class="tools">${devtools}<div class="t-puzzle">${puzzle}</div><div class="t-sep"></div>${split}
              <div class="t-col">${collections}</div><div class="t-ess">${essentials}</div><div class="t-dots">${dots}</div>
            </div>
          </div>
          <div class="favs"><span class="text">For quick access, place your favorites here on the favorites bar. Looking for your favorites?</span><a class="text">Check your profiles</a></div>
          <div class="page">
            <div class="header">${logo}
              <div class="nav">${this.nav.map((n) => html`<span class="text">${n}</span>`)}</div>
              <div class="auth"><span class="text">Sign In</span><span class="text">Sign Up</span></div>
            </div>
            <h1 class="title">Welcome back. We exist to make<br />entrepreneurship easier.</h1>
            <div class="google"><div class="glogo">${googleG}</div><span class="text gtext">Sign in with Google</span></div>
            <div class="form">
              <div class="or"><i></i><span class="text">Or, sign in with your email</span><i></i></div>
              <div class="label">Email</div>
              <div class="field">pailiharintr35@gmail.com</div>
              <div class="label2">Password</div>
              <div class="field"><div class="pw">${Array.from({ length: 11 }, () => html`<i></i>`)}</div></div>
              <div class="opts"><div class="box"></div><span class="text">Keep me signed in</span><span class="text link">Forgot Password?</span></div>
              <div class="submit">Sign in</div>
              <div class="foot">Do you have an account?<span class="link">Sign up</span></div>
            </div>
            <div class="bubble">${bot}</div>
          </div>
        </div>
        <div class="side">
          <div class="cell first">${copilot}</div>
          ${this.tools.map((t) => html`<div class="cell">${t}</div>`)}
          <div class="rule r1"></div>${plus(19)}
          <div class="rule r2"></div>${panel}<div class="s-gear">${gear}</div>
        </div>
      </div>
      <div class="taskbar">
        <div class="news"><div class="newsicon">${widget}<span class="badge pink">1</span></div>
          <div class="newstext"><div class="text">Upcoming</div><div class="text grey">Earnings</div></div>
        </div>
        <div class="start">${windows}</div>
        <div class="search">${magnify}<span class="text">Search</span>${poe}</div>
        <div class="apps">
          ${this.apps.map((a) => html`<div class="app ${a.cls ?? ""}"><div class="wrap ${a.wrap ?? ""}">${a.glyph}${a.count ? html`<span class="badge tan">${a.count}</span>` : ""}</div></div>`)}
        </div>
        <div class="tray">${chevron}
          <div class="lang"><div>ENG</div><div>IN</div></div>
          <div class="wifi">${wifi}</div><div class="speaker">${speaker}</div><div class="battery">${battery}</div>
          <div class="clock"><div>22:11</div><div>19-01-2024</div></div>${bell}
        </div>
      </div>
    `;
  }
}
